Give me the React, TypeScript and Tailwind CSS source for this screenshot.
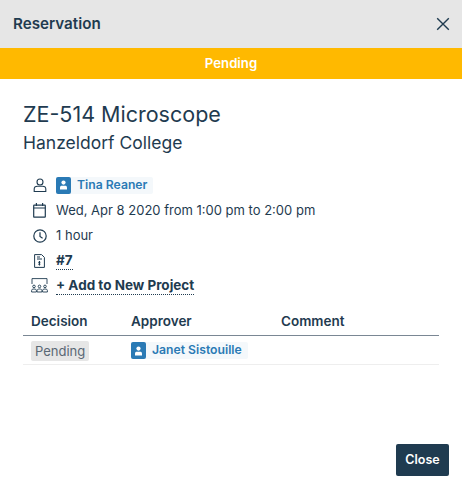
import React from "react";

const c = "#1f3b50";

function UserBadge({ name }: { name: string }) {
  return (
    <span className="inline-flex h-[17px] items-center rounded-[2px] bg-[#f4f8fb] pr-[6px] text-[12.2px] font-semibold text-[#2a7ab5]">
      <span className="mr-[6px] flex h-[17px] w-[15px] items-center justify-center rounded-[2px] bg-[#2a7ab5]">
        <svg width="9" height="10" viewBox="0 0 9 10" fill="#fff">
          <circle cx="4.5" cy="2.6" r="2.1" />
          <path d="M1 9.5V7.4c0-1 .8-1.6 1.8-1.6h3.4c1 0 1.8.6 1.8 1.6v2.1z" />
        </svg>
      </span>
      {name}
    </span>
  );
}

function Row({ icon, children, tall }: { icon: React.ReactNode; children: React.ReactNode; tall?: boolean }) {
  return (
    <div className={tall ? "flex h-[26px] items-center" : "flex h-[25px] items-center"}>
      <span className="flex w-[33px] justify-center">{icon}</span>
      {children}
    </div>
  );
}

export default function App() {
  return (
    <div className="flex h-[493px] w-[462px] flex-col bg-white font-['Inter',sans-serif] text-[#1f3b50]">
      <header className="flex h-[48px] items-center justify-between bg-[#e6e6e6] pl-[13px] pr-[11px]">
        <h1 className="text-[15.2px] font-semibold">Reservation</h1>
        <svg width="16" height="16" viewBox="0 0 16 16" fill="none" stroke={c} strokeWidth="1.4">
          <path d="M2.2 2.2l11.6 11.6M13.8 2.2L2.2 13.8" />
        </svg>
      </header>
      <div className="flex h-[31px] items-center justify-center bg-[#ffb900] text-[13.2px] font-semibold text-white">Pending</div>
      <main className="flex flex-1 flex-col px-[23px]">
        <h2 className="mt-[22px] text-[21.5px] leading-[26px]">ZE-514 Microscope</h2>
        <h3 className="mt-[4px] text-[17.5px] leading-[24px]">Hanzeldorf College</h3>
        <section className="mt-[17px] text-[13px]">
          <Row
            tall
            icon={
              <svg width="14" height="15" viewBox="0 0 14 15" fill="none" stroke={c} strokeWidth="1.1">
                <circle cx="7" cy="4" r="3" />
                <path d="M4.5 8.2h5c2 0 3.3 1.2 3.3 2.8v2.5H1.2V11c0-1.6 1.3-2.8 3.3-2.8z" />
              </svg>
            }
          >
            <UserBadge name="Tina Reaner" />
          </Row>
          <Row
            icon={
              <svg width="13" height="15" viewBox="0 0 13 15" fill="none" stroke={c} strokeWidth="1.2">
                <rect x="0.7" y="2.2" width="11.6" height="12" rx="0.5" />
                <path d="M.7 5h11.6M3.4 0v3M9.6 0v3" />
              </svg>
            }
          >
            Wed, Apr 8 2020 from 1:00 pm to 2:00 pm
          </Row>
          <Row
            icon={
              <svg width="14" height="14" viewBox="0 0 14 14" fill="none" stroke={c} strokeWidth="1.2">
                <circle cx="7" cy="7" r="6.2" />
                <path d="M7 3.2V7.4l2.6 1.8" />
              </svg>
            }
          >
            1 hour
          </Row>
          <Row
            icon={
              <svg width="11" height="14" viewBox="0 0 11 14" fill="none" stroke={c} strokeWidth="1">
                <path d="M.6.6h7l2.8 2.8v10H.6z" />
                <path d="M3 3h3M3 5h5M5.5 7v4.5M4.2 8.3h2.2M4.2 10.2h2.2" />
              </svg>
            }
          >
            <span className="border-b border-dotted border-[#1f3b50] text-[13.5px] font-bold leading-[17px]">#7</span>
          </Row>
          <Row
            icon={
              <svg width="17" height="15" viewBox="0 0 17 15" fill="none" stroke={c} strokeWidth="0.9">
                <path d="M1 6V.6h15V6" />
                <circle cx="3" cy="8.4" r="1.3" />
                <circle cx="8.5" cy="8.4" r="1.3" />
                <circle cx="14" cy="8.4" r="1.3" />
                <path d="M.6 14v-1.5c0-1 .8-1.5 2.4-1.5s2.4.5 2.4 1.5V14zM6.1 14v-1.5c0-1 .8-1.5 2.4-1.5s2.4.5 2.4 1.5V14zM11.6 14v-1.5c0-1 .8-1.5 2.4-1.5s2.4.5 2.4 1.5V14z" />
              </svg>
            }
          >
            <span className="border-b border-dotted border-[#1f3b50] text-[13.5px] font-bold leading-[17px]">+ Add to New Project</span>
          </Row>
        </section>
        <table className="mt-[9px] w-[416px] table-fixed text-left">
          <thead>
            <tr className="h-[28px] border-b border-[#7a8794] text-[13.5px]">
              <th className="w-[108px] pl-[8px] font-semibold">Decision</th>
              <th className="w-[150px] pl-[0px] font-semibold">Approver</th>
              <th className="font-semibold">Comment</th>
            </tr>
          </thead>
          <tbody>
            <tr className="h-[29px] border-b border-[#eeeeee]">
              <td className="pl-[8px]">
                <span className="inline-block h-[20px] rounded-[2px] bg-[#e6e6e6] px-[4px] text-[13px] leading-[20px] text-[#5a6875]">Pending</span>
              </td>
              <td>
                <UserBadge name="Janet Sistouille" />
              </td>
              <td />
            </tr>
          </tbody>
        </table>
      </main>
      <footer className="flex justify-end pb-[17px] pr-[13px]">
        <button className="h-[32px] w-[53px] rounded-[2px] bg-[#1f3b50] text-[12.5px] font-semibold text-white">Close</button>
      </footer>
    </div>
  );
}
